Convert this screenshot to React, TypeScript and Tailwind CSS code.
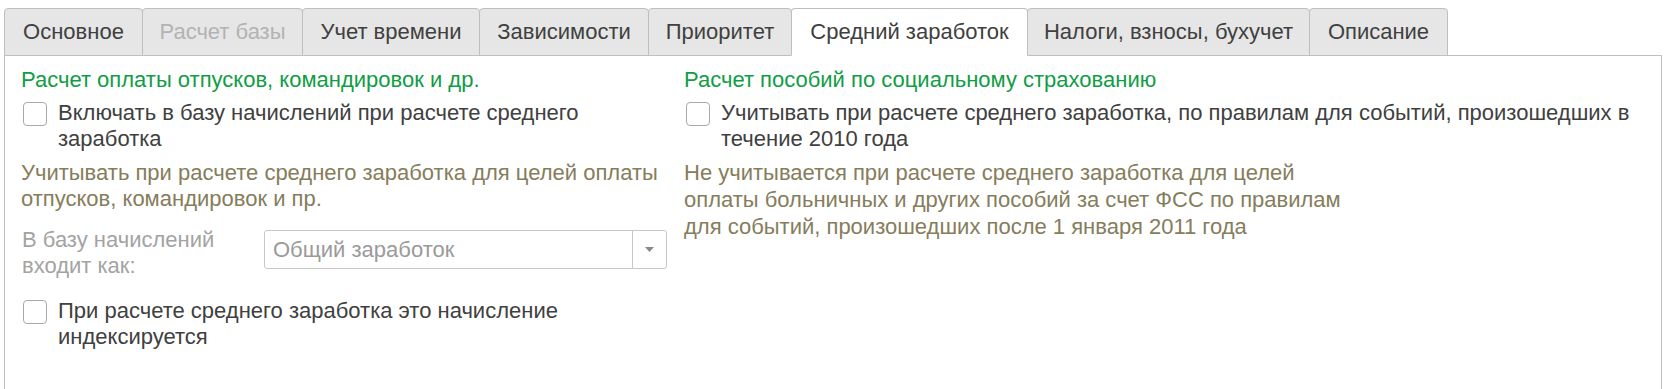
import React from "react";

const tabs = [
  { name: "Основное", w: "w-[139px]" },
  { name: "Расчет базы", w: "w-[161px]", disabled: true },
  { name: "Учет времени", w: "w-[178px]" },
  { name: "Зависимости", w: "w-[170px]" },
  { name: "Приоритет", w: "w-[144px]" },
  { name: "Средний заработок", w: "w-[237px]", active: true },
  { name: "Налоги, взносы, бухучет", w: "w-[283px]" },
  { name: "Описание", w: "w-[139px]" },
];

function Checkbox() {
  return (
    <span className="mt-[2px] block h-[24px] w-[24px] shrink-0 rounded-[4px] border border-[#a9a9a9] bg-white" />
  );
}

export default function App() {
  return (
    <div className="h-[389px] overflow-hidden bg-white pl-[4px] pr-[10px] pt-[8px] font-['Liberation_Sans',Arial,sans-serif] text-[22px] leading-[26px] text-[#404040]">
      {/* вкладки */}
      <div className="flex">
        {tabs.map((t, i) => (
          <div
            key={t.name}
            className={`flex h-[48px] items-center justify-center rounded-t-[4px] border border-[#bfbfbf] ${t.w} ${
              i > 0 ? "-ml-px" : ""
            } ${t.active ? "relative z-10 border-b-white bg-white" : "bg-[#e6e6e6]"} ${
              t.disabled ? "text-[#b3b3b3]" : "text-[#404040]"
            }`}
          >
            {t.name}
          </div>
        ))}
      </div>

      {/* содержимое вкладки */}
      <div className="-mt-px flex h-[400px] border border-[#bfbfbf] pt-[11px]">
        {/* левая колонка */}
        <div className="flex w-[663px] shrink-0 flex-col pl-[16px]">
          <div className="text-[#0f9d45]">Расчет оплаты отпусков, командировок и др.</div>
          <div className="mt-[7px] flex items-start gap-[11px] pl-[2px]">
            <Checkbox />
            <div>
              Включать в базу начислений при расчете среднего
              <br />
              заработка
            </div>
          </div>
          <div className="mt-[8px] text-[#857d5b]">
            Учитывать при расчете среднего заработка для целей оплаты
            <br />
            отпусков, командировок и пр.
          </div>
          <div className="mt-[15px] flex items-start">
            <div className="w-[243px] pl-[1px] text-[#a3a3a3]">
              В базу начислений
              <br />
              входит как:
            </div>
            <div className="mt-[3px] flex h-[39px] w-[403px] rounded-[3px] border border-[#c8c8c8] bg-white">
              <div className="flex flex-1 items-center pl-[8px] text-[#9a9a9a]">Общий заработок</div>
              <div className="flex w-[34px] items-center justify-center border-l border-[#c8c8c8]">
                <svg width="9" height="5" viewBox="0 0 9 5">
                  <path d="M0 0h9L4.5 5z" fill="#8a8a8a" />
                </svg>
              </div>
            </div>
          </div>
          <div className="mt-[19px] flex items-start gap-[11px] pl-[2px]">
            <Checkbox />
            <div>
              При расчете среднего заработка это начисление
              <br />
              индексируется
            </div>
          </div>
        </div>

        {/* правая колонка */}
        <div className="flex flex-1 flex-col pl-[16px]">
          <div className="text-[#0f9d45]">Расчет пособий по социальному страхованию</div>
          <div className="mt-[7px] flex items-start gap-[11px] pl-[2px]">
            <Checkbox />
            <div>
              Учитывать при расчете среднего заработка, по правилам для событий, произошедших в
              <br />
              течение 2010 года
            </div>
          </div>
          <div className="mt-[7px] leading-[27px] text-[#857d5b]">
            Не учитывается при расчете среднего заработка для целей
            <br />
            оплаты больничных и других пособий за счет ФСС по правилам
            <br />
            для событий, произошедших после 1 января 2011 года
          </div>
        </div>
      </div>
    </div>
  );
}
